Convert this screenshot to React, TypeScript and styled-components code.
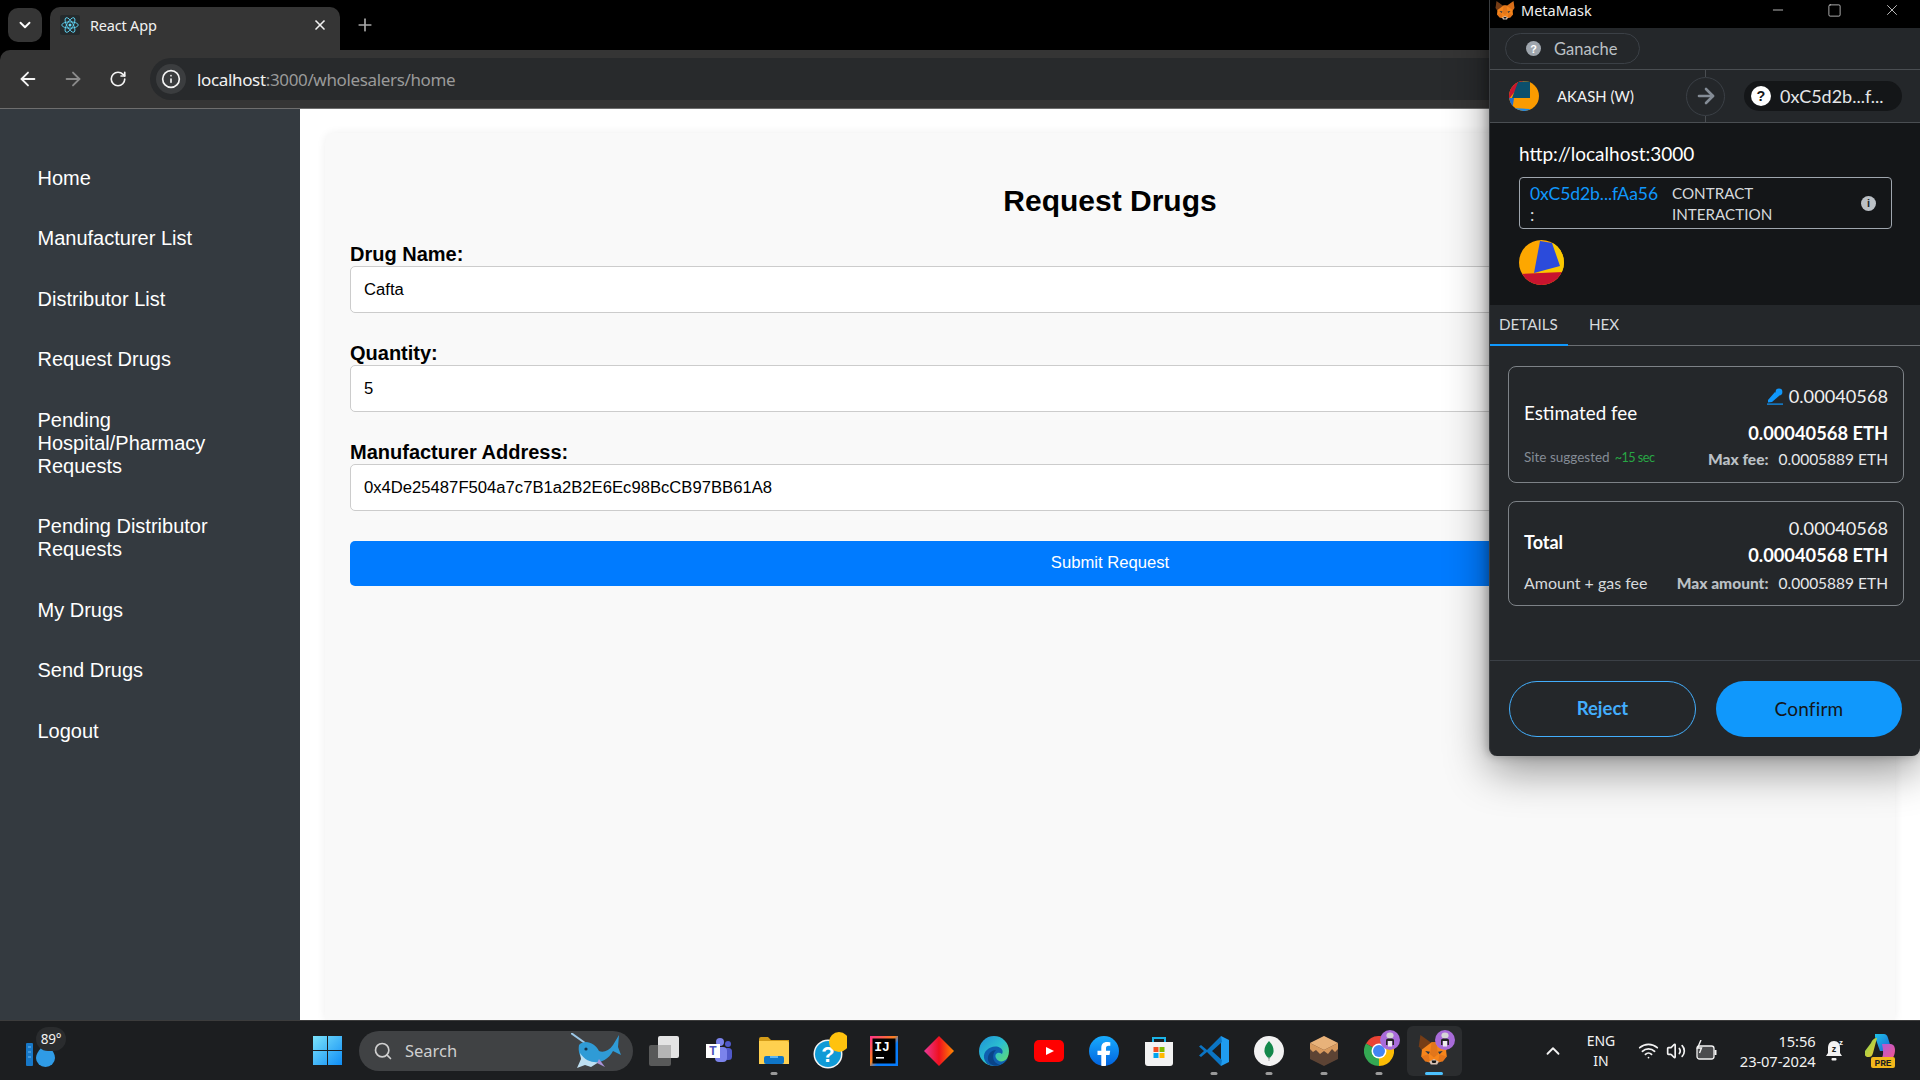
import React from "react";
import styled, { createGlobalStyle } from "styled-components";
import { ArrowLeft, ArrowRight, RotateCw, Info, ChevronDown, ChevronUp, X, Plus, Minus, Square, Search as SearchIcon, Wifi, Volume2, ArrowRight as MmArrow } from "lucide-react";

const GlobalStyle = createGlobalStyle`
  html, body { margin: 0; padding: 0; background: #000; }
  * { box-sizing: border-box; }
`;

const UI = `"Noto Sans", "Open Sans", sans-serif`;
const WEB = `"Liberation Sans", Arial, sans-serif`;
const MM = `Lato, "Noto Sans", sans-serif`;

const Desktop = styled.div`
  position: relative; width: 1920px; height: 1080px; overflow: hidden;
  display: flex; flex-direction: column; background: #000; font-family: ${WEB};
`;

/* ---------- browser chrome ---------- */
const TabStrip = styled.div`
  height: 50px; flex: none; background: #000; display: flex; align-items: flex-start;
  padding: 8px 0 0 8px;
`;
const TabSearchBtn = styled.div`
  width: 34px; height: 34px; border-radius: 10px; background: #353535; color: #fff;
  display: flex; align-items: center; justify-content: center;
`;
const Tab = styled.div`
  width: 290px; height: 43px; margin: -1px 0 0 8px; background: #353535;
  border-radius: 10px 10px 0 0; display: flex; align-items: center; padding: 0 12px 8px 10px;
  color: #f1f1f1; font: 400 14.5px ${UI};
`;
const TabIcon = styled.div`
  width: 20px; height: 20px; background: #252a2c; border-radius: 2px; display: flex;
  align-items: center; justify-content: center;
`;
const TabTitle = styled.span`
  margin-left: 10px; flex: 1; letter-spacing: -0.2px;
`;
const NewTab = styled.div`
  margin: 7px 0 0 15px; color: #a8a8a8; display: flex;
`;
const Toolbar = styled.div`
  height: 59px; flex: none; background: #353535; border-bottom: 1px solid #6e6e6e;
  border-radius: 10px 0 0 0; display: flex; align-items: center; padding: 0 0 1px 16px;
`;
const NavBtn = styled.div<{ $dim?: boolean }>`
  width: 24px; margin-right: 21px; display: flex; justify-content: center;
  color: ${(p) => (p.$dim ? "#8a8a8a" : "#f4f4f4")};
`;
const Omnibox = styled.div`
  width: 1400px; margin-left: -1px; height: 42px; border-radius: 21px 0 0 21px; background: #282a2c;
  display: flex; align-items: center; padding: 1px 0 0 6px; font: 400 17px ${UI};
`;
const SiteInfo = styled.div`
  width: 30px; height: 30px; margin-top: -1px; border-radius: 50%; background: #3b3d3f; color: #f4f4f4;
  display: flex; align-items: center; justify-content: center;
`;
const UrlHost = styled.span`
  margin-left: 11px; color: #f2f2f2; letter-spacing: -0.35px;
`;
const UrlPath = styled.span`
  color: #9a9a9a; letter-spacing: -0.35px;
`;

/* ---------- page ---------- */
const Page = styled.div`
  flex: 1; min-height: 0; display: flex; background: #fff;
`;
const Sidebar = styled.nav`
  width: 300px; flex: none; background: #343a40; padding: 57.5px 0 0 37.5px;
  display: flex; flex-direction: column; gap: 37.55px; color: #fff; font-size: 20px; line-height: 23px;
`;
const NavLink = styled.div`
  width: 210px;
`;
const Main = styled.main`
  flex: 1; min-width: 0; padding: 24px 25px 0;
`;
const Card = styled.section`
  height: 100%; background: #f9f9f9; border-radius: 10px 10px 0 0; padding: 49px 25px 0;
  box-shadow: 0 0 10px rgba(0, 0, 0, 0.07);
`;
const Title = styled.h2`
  margin: 0 0 24px; text-align: center; font-size: 30px; line-height: 37px; font-weight: 700; color: #000;
`;
const Field = styled.div`
  margin-bottom: 29px;
`;
const Label = styled.label`
  display: block; font-size: 20px; line-height: 23px; font-weight: 700; color: #000;
`;
const TextInput = styled.div`
  height: 47px; background: #fff; border: 1px solid #ccc; border-radius: 5px; padding: 0 13px;
  display: flex; align-items: center; font-size: 16.65px; color: #000;
`;
const Submit = styled.div`
  height: 45px; margin-top: 30px; padding-bottom: 2px; background: #007bff; color: #fff; border-radius: 5px;
  display: flex; align-items: center; justify-content: center; font-size: 16.65px;
`;

/* ---------- metamask window ---------- */
const Popup = styled.aside`
  position: absolute; top: 0; right: 0; width: 431px; height: 756px; background: #24272a;
  border-radius: 0 0 8px 8px; box-shadow: 0 14px 44px rgba(0, 0, 0, 0.42), -2px 0 10px rgba(0,0,0,.25);
  border-left: 1px solid #3a3d40; display: flex; flex-direction: column; font-family: ${MM}; color: #d6d9dc;
  overflow: visible;
`;
const TitleBar = styled.div`
  height: 28px; background: #000; display: flex; align-items: center; padding: 0 0 8px 5px; color: #f0f0f0;
  font: 400 14.5px ${UI};
`;
const TitleText = styled.span`
  margin-left: 6px; flex: 1;
`;
const WinBtn = styled.div`
  width: 57px; display: flex; justify-content: center; color: #e0e0e0;
`;
const NetworkRow = styled.div`
  height: 42px; border-bottom: 1px solid #4a4e52; padding: 5px 0 0 15px;
`;
const NetworkPill = styled.div`
  width: 135px; height: 31px; border: 1px solid #3b4046; border-radius: 16px; display: flex;
  align-items: center; padding-left: 20px; gap: 13px; color: #bbc0c5; font-size: 16.5px;
`;
const Qmark = styled.div<{ $size: number; $light?: boolean }>`
  width: ${(p) => p.$size}px; height: ${(p) => p.$size}px; border-radius: 50%; flex: none;
  background: ${(p) => (p.$light ? "#fff" : "#9fa6ae")}; color: ${(p) => (p.$light ? "#141618" : "#fff")};
  display: flex; align-items: center; justify-content: center; font: 700 ${(p) => p.$size * 0.72}px ${WEB};
`;
const AccountRow = styled.div`
  position: relative; height: 53px; border-bottom: 1px solid #4a4e52; display: flex; align-items: center;
  padding-left: 19px; font-size: 14.8px; color: #f2f2f2;
`;
const AccountName = styled.span`
  margin-left: 18px; width: 129px; letter-spacing: .1px;
`;
const ArrowCircle = styled.div`
  position: relative; width: 39px; height: 39px; border-radius: 50%; border: 1px solid #3b4046; background: #24272a;
  display: flex; align-items: center; justify-content: center; color: #848c96; flex: none;
  &::before, &::after { content: ""; position: absolute; left: 18px; width: 1px; height: 7px; background: #4a4e52; }
  &::before { top: -8px; }
  &::after { bottom: -8px; }
`;
const ToPill = styled.div`
  width: 158px; height: 30px; margin-left: 19px; border-radius: 15px; background: #141618;
  display: flex; align-items: center; padding-left: 7px; gap: 9px; font-size: 18px; color: #e4e6e8;
`;
const Origin = styled.div`
  height: 182px; background: #141618; padding: 19px 28px 0 29px; flex: none;
`;
const OriginUrl = styled.div`
  font-size: 19px; line-height: 24px; color: #fff;
`;
const ContractBox = styled.div`
  margin-top: 11px; height: 52px; border: 1px solid #9fa6ae; border-radius: 4px; display: flex;
  padding: 5px 10px 0; font-size: 16px; line-height: 21px;
`;
const ContractAddr = styled.div`
  width: 142px; color: #1098fc; font-size: 17.5px; letter-spacing: -.05px;
`;
const Colon = styled.div`
  color: #d6d9dc;
`;
const ContractType = styled.div`
  flex: 1; color: #d6d9dc; font-size: 15.2px;
`;
const InfoDot = styled.div`
  align-self: center; margin: -5px 5px 0 0; width: 15px; height: 15px; border-radius: 50%; background: #bbc0c5; color: #24272a;
  display: flex; align-items: center; justify-content: center; font: 700 11px ${WEB};
`;
const ContractAvatar = styled.div`
  margin-top: 11px; display: flex;
`;
const Tabs = styled.div`
  height: 41px; flex: none; border-bottom: 1px solid #6a6e72; display: flex; font-size: 15.2px;
`;
const TabItem = styled.div<{ $active?: boolean }>`
  height: 41px; display: flex; align-items: center; padding: 0 0 2px ${(p) => (p.$active ? 9 : 21)}px;
  width: 78px; color: #d6d9dc;
  border-bottom: 2px solid ${(p) => (p.$active ? "#1098fc" : "transparent")};
`;
const Details = styled.div`
  flex: 1; padding: 20px 16px 0 18px; display: flex; flex-direction: column; gap: 18px;
`;
const FeeCard = styled.div<{ $h: number; $pt: number }>`
  height: ${(p) => p.$h}px; padding: ${(p) => p.$pt}px 15px 0; border: 1px solid #7d8287; border-radius: 8px;
  font-size: 17px; line-height: 24px; color: #e6e8ea;
`;
const FeeTop = styled.div`
  display: flex; justify-content: space-between; align-items: center;
`;
const FeeLabel = styled.div<{ $bold?: boolean }>`
  font-weight: ${(p) => (p.$bold ? 700 : 400)}; color: #fff; font-size: ${(p) => (p.$bold ? 18 : 18.8)}px;
  padding-bottom: ${(p) => (p.$bold ? 0 : 3)}px;
`;
const Amounts = styled.div<{ $gap: number }>`
  display: flex; flex-direction: column; align-items: flex-end; gap: ${(p) => p.$gap}px;
`;
const Amount = styled.div`
  display: flex; align-items: center; gap: 6px; font-size: 18.2px; color: #f0f0f0;
`;
const AmountStrong = styled.div`
  font-size: 18.3px; font-weight: 700; color: #fff;
`;
const FeeBottom = styled.div<{ $mt: number }>`
  margin-top: ${(p) => p.$mt}px; display: flex; justify-content: space-between; align-items: center;
`;
const SuggestGroup = styled.span`
  margin: -2.5px 0 2.5px;
`;
const Hint = styled.span<{ $small?: boolean }>`
  color: ${(p) => (p.$small ? "#848c96" : "#d6d9dc")}; font-size: ${(p) => (p.$small ? 13.5 : 16)}px;
`;
const Soon = styled.span`
  color: #28a745; font-size: 12.6px; margin-left: 5px; letter-spacing: -.5px;
`;
const MaxRow = styled.div`
  font-size: 15.5px; color: #e6e8ea; display: flex; gap: 10px;
`;
const MaxKey = styled.b`
  color: #bbc0c5; font-weight: 900;
`;
const Footer = styled.div`
  height: 96px; flex: none; border-top: 1px solid #3b4046; padding: 20px 17px 0 19px; display: flex; gap: 20px;
`;
const Reject = styled.div`
  width: 187px; height: 56px; padding-bottom: 2px; border: 1px solid #43aefc; border-radius: 28px; color: #43aefc; font-size: 18.5px; font-weight: 700;
  display: flex; align-items: center; justify-content: center;
`;
const Confirm = styled.div`
  width: 186px; height: 56px; padding-bottom: 2px; border-radius: 28px; background: #1098fc; color: #141618; font-size: 19px; font-weight: 400; letter-spacing: .2px;
  display: flex; align-items: center; justify-content: center;
`;

/* ---------- taskbar ---------- */
const Taskbar = styled.footer`
  height: 60px; flex: none; background: #1c1e20; border-top: 1px solid #3c3c3c; display: flex; align-items: center;
  color: #f2f2f2; font-family: ${UI};
`;
const Weather = styled.div`
  position: relative; width: 313px; height: 100%; padding: 16px 0 0 26px; flex: none;
`;
const Temp = styled.span`
  position: absolute; left: 36px; top: 6px; width: 30px; height: 24px; border-radius: 12px; background: #2a2c2e;
  display: flex; align-items: center; justify-content: center; font-size: 13.5px; letter-spacing: -.3px;
`;
const SearchBox = styled.div`
  width: 274px; height: 40px; margin-left: 17px; border-radius: 20px; background: #404244; flex: none;
  display: flex; align-items: center; padding: 0 12px 0 14px; color: #cfcfcf; font-size: 16.5px;
`;
const SearchText = styled.span`
  margin-left: 12px; flex: 1;
`;
const Slots = styled.div`
  margin-left: 3.5px; display: flex; flex: none;
`;
const Slot = styled.div<{ $active?: boolean }>`
  position: relative; width: 55px; height: 50px; display: flex; align-items: center; justify-content: center;
  border-radius: 6px; background: ${(p) => (p.$active ? "#2b2d2f" : "transparent")};
`;
const RunDot = styled.span<{ $active?: boolean }>`
  position: absolute; bottom: 1px; left: 50%; transform: translateX(-50%); height: 3px; border-radius: 2px;
  width: ${(p) => (p.$active ? 18 : 7)}px; background: ${(p) => (p.$active ? "#4cc2ff" : "#9a9a9a")};
`;
const Bubble = styled.span`
  position: absolute; top: 4px; right: 7px; display: flex;
`;
const Tray = styled.div`
  margin-left: 79.5px; display: flex; align-items: center; height: 100%;
`;
const TraySlot = styled.div<{ $w: number }>`
  position: relative; width: ${(p) => p.$w}px; display: flex; align-items: center; justify-content: center; flex: none; color: #f2f2f2;
`;
const Lang = styled.div`
  text-align: center; font-size: 14px; line-height: 20px;
`;
const Clock = styled.div`
  width: 100%; text-align: right; font-size: 14.7px; line-height: 20px; letter-spacing: -.1px;
`;

/* ---------- drawings ---------- */
const ReactLogo = () => (
  <svg width="18" height="18" viewBox="-12 -12 24 24" fill="none" stroke="#61dafb" strokeWidth="1.1">
    <circle r="2" fill="#61dafb" stroke="none" />
    <ellipse rx="11" ry="4.2" />
    <ellipse rx="11" ry="4.2" transform="rotate(60)" />
    <ellipse rx="11" ry="4.2" transform="rotate(120)" />
  </svg>
);
const Fox = ({ size }: { size: number }) => (
  <svg width={size} height={size * 0.95} viewBox="0 0 40 38">
    <polygon points="3,0 17,10 6,21 1,14" fill="#763d16" />
    <polygon points="37,0 23,10 34,21 39,14" fill="#d96f1a" />
    <polygon points="5,18 17,9 23,9 35,18 36,27 27,34 13,34 4,27" fill="#f6851b" />
    <polygon points="4,27 13,24 15,34 9,33" fill="#e4761b" />
    <polygon points="36,27 27,24 25,34 31,33" fill="#e4761b" />
    <polygon points="17,9 23,9 25,24 20,28 15,24" fill="#e2761b" />
    <polygon points="9,20 15,21 13,24" fill="#233447" />
    <polygon points="31,20 25,21 27,24" fill="#233447" />
    <polygon points="14,33 20,30 26,33 24,37 16,37" fill="#d7c1b3" />
    <polygon points="17,32 23,32 22,35 18,35" fill="#161616" />
  </svg>
);
const AccountAvatar = () => (
  <svg width="30" height="30" viewBox="0 0 30 30">
    <defs><clipPath id="acc"><circle cx="15" cy="15" r="15" /></clipPath></defs>
    <g clipPath="url(#acc)">
      <rect width="30" height="30" fill="#fb9b00" />
      <polygon points="0,10 6,0 14,0 0,18" fill="#c8152f" />
      <polygon points="9,1 21,0 21,17 3,17" fill="#0b4f6c" />
      <polygon points="0,17 5,17 3,30" fill="#1f6fd0" />
      <polygon points="4,27 21,28 20,30 6,30" fill="#1e88e5" />
    </g>
  </svg>
);
const ContractBlockie = () => (
  <svg width="45" height="45" viewBox="0 0 45 45">
    <defs><clipPath id="con"><circle cx="22.5" cy="22.5" r="22.5" /></clipPath></defs>
    <g clipPath="url(#con)">
      <rect width="45" height="45" fill="#fda700" />
      <polygon points="33,3 33,0 45,0 45,32 20,33" fill="#f9c800" />
      <polygon points="21,1 33,3 41,26 15,33" fill="#2b4bdb" />
      <polygon points="0,34 45,32 45,45 0,45" fill="#c8142e" />
    </g>
  </svg>
);
const Pencil = () => (
  <svg width="16" height="17" viewBox="0 0 16 17">
    <path d="M1 12 L8 4 L12.500 7.500 L5 14 L1 14.500 Z" fill="#1098fc" />
    <circle cx="12" cy="4" r="3.400" fill="#1098fc" />
    <rect x="0" y="15.500" width="16" height="1.200" fill="#1098fc" />
  </svg>
);
const WeatherIcon = () => (
  <svg width="30" height="30" viewBox="0 0 30 30">
    <rect x="0" y="6" width="7" height="23" rx="1" fill="#1778c8" />
    <path d="M2 10h3M2 15h3M2 20h3" stroke="#6fb8ee" />
    <path d="M20 6c0 0 -10 8 -10 15a9.500 9 0 0 0 19 0c0 -7 -9 -15 -9 -15z" fill="#2f9be6" />
  </svg>
);
const StartLogo = () => (
  <svg width="29" height="29" viewBox="0 0 29 29">
    <defs>
      <linearGradient id="win" x1="0" y1="0" x2="1" y2="1"><stop offset="0" stopColor="#7be3fb" /><stop offset="1" stopColor="#0f8df5" /></linearGradient>
    </defs>
    <path d="M0 0h14v14H0zM15 0h14v14H15zM0 15h14v14H0zM15 15h14v14H15z" fill="url(#win)" />
  </svg>
);
const Whale = () => (
  <svg width="50" height="36" viewBox="0 0 50 36">
    <path d="M0 0 L14 10" stroke="#9cc7e6" strokeWidth="2" />
    <path d="M8 12 C14 6 24 10 28 18 C32 20 38 18 42 12 L48 2 L47 14 L50 22 L42 18 C38 26 30 30 22 30 C14 30 6 24 8 12Z" fill="#2f9bd6" />
    <path d="M9 20 C14 28 22 30 28 29 L20 34 L14 32 L6 35 L10 26Z" fill="#bfe0f2" />
    <path d="M28 26 L34 34 L26 30Z" fill="#a993d8" />
    <circle cx="15" cy="16" r="1.600" fill="#12324a" />
  </svg>
);
const TaskView = () => (
  <svg width="30" height="30" viewBox="0 0 30 30">
    <rect x="9" y="0" width="21" height="22" rx="2" fill="#e4e4e4" />
    <rect x="0" y="9" width="22" height="21" rx="2" fill="#5f5f5f" fillOpacity=".9" />
    <rect x="9" y="9" width="13" height="13" fill="#b5b5b5" />
  </svg>
);
const Teams = () => (
  <svg width="28" height="28" viewBox="0 0 28 28">
    <circle cx="15" cy="5" r="4" fill="#7b83eb" />
    <circle cx="23" cy="7" r="3" fill="#5059c9" />
    <rect x="19" y="11" width="8" height="12" rx="3.500" fill="#5059c9" />
    <rect x="10" y="10" width="12" height="15" rx="4" fill="#7b83eb" />
    <rect x="1" y="7" width="14" height="14" fill="#fff" />
    <text x="8" y="18" textAnchor="middle" fontSize="12" fontWeight="700" fontFamily="Liberation Sans" fill="#4b53bc">T</text>
  </svg>
);
const Folder = () => (
  <svg width="30" height="27" viewBox="0 0 30 27">
    <path d="M0 2a2 2 0 0 1 2-2h7l3 3h18v5H0z" fill="#d49c19" />
    <path d="M0 4h28a2 2 0 0 1 2 2v21H0z" fill="#ffd04f" />
    <rect x="5" y="19" width="20" height="8" rx="2" fill="#0f76c8" />
    <rect x="11" y="19" width="8" height="2" fill="#5fb6f0" />
  </svg>
);
const HelpIcon = () => (
  <svg width="36" height="38" viewBox="0 0 36 38">
    <circle cx="17" cy="22" r="14.500" fill="#f4f4f4" />
    <circle cx="17" cy="22" r="13" fill="#0f9ad6" />
    <text x="17" y="30" textAnchor="middle" fontSize="22" fontWeight="700" fontFamily="Liberation Sans" fill="#fff">?</text>
    <circle cx="28" cy="10" r="10" fill="#ffc20e" />
  </svg>
);
const Intellij = () => (
  <svg width="28" height="30" viewBox="0 0 28 30" preserveAspectRatio="none">
    <defs><linearGradient id="ij" x1="0" y1="0" x2="1" y2="1"><stop offset="0" stopColor="#ff318c" /><stop offset=".45" stopColor="#fc801d" /><stop offset=".6" stopColor="#087cfa" /><stop offset="1" stopColor="#087cfa" /></linearGradient></defs>
    <rect width="28" height="30" fill="url(#ij)" />
    <rect x="2.500" y="2.500" width="23" height="25" fill="#000" />
    <text x="12" y="15" textAnchor="middle" fontSize="13" fontWeight="700" fontFamily="Liberation Mono" fill="#fff">IJ</text>
    <rect x="6" y="21" width="8" height="1.600" fill="#fff" />
  </svg>
);
const Diamond = () => (
  <svg width="30" height="30" viewBox="0 0 30 30">
    <defs><linearGradient id="dia" x1="0" y1="0" x2="1" y2="0"><stop offset="0" stopColor="#e9399a" /><stop offset=".5" stopColor="#f0101f" /><stop offset="1" stopColor="#ff8a00" /></linearGradient></defs>
    <polygon points="15,0 30,15 15,30 0,15" fill="url(#dia)" />
  </svg>
);
const Edge = () => (
  <svg width="30" height="30" viewBox="0 0 30 30">
    <defs>
      <linearGradient id="ed" x1="0" y1="0" x2="1" y2="1"><stop offset="0" stopColor="#1f8fd8" /><stop offset=".5" stopColor="#2bc0d0" /><stop offset="1" stopColor="#6fe05c" /></linearGradient>
    </defs>
    <circle cx="15" cy="15" r="15" fill="url(#ed)" />
    <path d="M5 22 C4 15 11 9.500 18 10.500 C22.500 11.500 25 15 23 18 C19 15 15 18 17 22 C19 26 24 27 29 22 C26 27.500 21 30 15 30 C10 30 6 27 5 22Z" fill="#0f5fb0" />
    <path d="M9 24 C8 18 13 14 17 14 C14 17 13 22 16 26 C18 28 21 29 21 29 C15 31 10 28 9 24Z" fill="#0a4488" />
  </svg>
);
const YouTube = () => (
  <svg width="30" height="22" viewBox="0 0 30 22">
    <rect width="30" height="22" rx="5" fill="#f00" />
    <polygon points="12,7 20,11 12,15" fill="#fff" />
  </svg>
);
const Facebook = () => (
  <svg width="30" height="30" viewBox="0 0 30 30">
    <defs><linearGradient id="fb" x1="0" y1="0" x2="0" y2="1"><stop offset="0" stopColor="#18acfe" /><stop offset="1" stopColor="#0163e0" /></linearGradient></defs>
    <circle cx="15" cy="15" r="15" fill="url(#fb)" />
    <path d="M20.500 19l.7-4.300h-4.200v-2.700c0-1.200.6-2.300 2.400-2.300h1.900V6.200s-1.700-.3-3.400-.3c-3.400 0-5.600 2.100-5.600 5.800v3h-3.800V19h3.800v10.800a15 15 0 0 0 4.700 0V19z" fill="#fff" />
  </svg>
);
const Store = () => (
  <svg width="28" height="30" viewBox="0 0 28 30">
    <path d="M8 6V2h12v4" fill="none" stroke="#1bb4e8" strokeWidth="2" />
    <path d="M0 6h28v21a3 3 0 0 1 -3 3H3a3 3 0 0 1 -3 -3z" fill="#f2f2f2" />
    <rect x="8.500" y="11" width="5" height="5" fill="#f25022" />
    <rect x="14.500" y="11" width="5" height="5" fill="#7fba00" />
    <rect x="8.500" y="17" width="5" height="5" fill="#00a4ef" />
    <rect x="14.500" y="17" width="5" height="5" fill="#ffb900" />
  </svg>
);
const VSCode = () => (
  <svg width="30" height="30" viewBox="0 0 30 30">
    <path d="M22 0 L30 4 V26 L22 30 Z" fill="#1f9cf0" />
    <path d="M22 0 L8 14 L2 9 L0 10.500 L5 15 L0 19.500 L2 21 L8 16 L22 30 L23 24 L13 15 L23 6 Z" fill="#0b75c4" />
  </svg>
);
const Mongo = () => (
  <svg width="30" height="30" viewBox="0 0 30 30">
    <circle cx="15" cy="15" r="15" fill="#f2f2f2" />
    <path d="M15 5c3 3 5 7 4.500 11c-.5 3 -3 5 -4.500 7c-1.500 -2 -4 -4 -4.500 -7C10 12 12 8 15 5z" fill="#13874b" />
    <rect x="14.500" y="21" width="1" height="4" fill="#a8a8a8" />
  </svg>
);
const Crate = () => (
  <svg width="28" height="30" viewBox="0 0 28 30">
    <polygon points="14,0 28,7 28,23 14,30 0,23 0,7" fill="#5c4334" />
    <polygon points="14,0 28,7 14,14 0,7" fill="#e8b27a" />
    <path d="M0 7 L14 14 L28 7 V13 L25 16 L22 13 L18 18 L14 15 L10 18 L6 14 L3 16 L0 13Z" fill="#d89a5e" />
  </svg>
);
const Chrome = () => (
  <svg width="30" height="30" viewBox="0 0 30 30">
    <path d="M15 15 L2 7.500 A15 15 0 0 1 28 7.500Z" fill="#ea4335" />
    <path d="M15 15 L28 7.500 A15 15 0 0 1 15 30Z" fill="#fbbc05" />
    <path d="M15 15 L15 30 A15 15 0 0 1 2 7.500Z" fill="#34a853" />
    <circle cx="15" cy="15" r="7.500" fill="#fff" />
    <circle cx="15" cy="15" r="6" fill="#4285f4" />
  </svg>
);
const Badge = () => (
  <svg width="20" height="20" viewBox="0 0 20 20">
    <circle cx="10" cy="10" r="10" fill="#a86bd9" />
    <ellipse cx="10" cy="5.500" rx="3.600" ry="3" fill="#d5d5d5" />
    <path d="M6 15V10.500C6 9 7 8.500 10 8.500C13 8.500 14 9 14 10.500V15h-1.500V11h-5v4z" fill="#222" />
    <rect x="8" y="11" width="4" height="5.500" fill="#eee" />
  </svg>
);
const Battery = () => (
  <svg width="24" height="22" viewBox="0 0 24 22" fill="none" stroke="#f2f2f2" strokeWidth="1.300">
    <rect x="2" y="6" width="17" height="13" rx="2.500" fill="#d8d8d8" fillOpacity=".25" />
    <path d="M20.500 10v5" strokeWidth="2" />
    <path d="M6 0 L2.500 8 H6.500 L4.500 13" strokeWidth="1.400" />
  </svg>
);
const SnoozeBell = () => (
  <svg width="20" height="26" viewBox="0 0 20 26">
    <path d="M9 3c-4 0 -6 3 -6 7v5l-2 3h16l-2 -3v-5c0 -4 -2 -7 -6 -7z" fill="#f2f2f2" />
    <rect x="6.500" y="20" width="5" height="2.500" rx="1" fill="#f2f2f2" />
    <text x="9" y="14" textAnchor="middle" fontSize="9" fontWeight="700" fontFamily="Liberation Sans" fill="#1c1e20">z</text>
    <text x="16" y="7" textAnchor="middle" fontSize="8" fontWeight="700" fontFamily="Liberation Sans" fill="#f2f2f2">z</text>
  </svg>
);
const Copilot = () => (
  <svg width="30" height="34" viewBox="0 0 30 34">
    <defs>
      <linearGradient id="cp1" x1="0" y1="0" x2="1" y2="1"><stop offset="0" stopColor="#1dc3e8" /><stop offset="1" stopColor="#1b5fd6" /></linearGradient>
      <linearGradient id="cp2" x1="0" y1="0" x2="1" y2="1"><stop offset="0" stopColor="#7ed957" /><stop offset="1" stopColor="#f5c52b" /></linearGradient>
      <linearGradient id="cp3" x1="0" y1="0" x2="1" y2="1"><stop offset="0" stopColor="#b05ad8" /><stop offset="1" stopColor="#f2558e" /></linearGradient>
    </defs>
    <path d="M10 0h9c2 0 3 1 4 4l4 13H15L10 3z" fill="url(#cp1)" />
    <path d="M6 9c1 -3 3 -5 6 -5l-4 15c-1 3 -2 4 -4 4H3C0 23 -1 20 0 17z" fill="url(#cp2)" />
    <path d="M17 10h8c3 0 5 2 5 6c0 5 -2 9 -5 9h-9c2 -2 3 -6 1 -15z" fill="url(#cp3)" />
    <rect x="6" y="23" width="24" height="11" rx="2" fill="#f2b71b" />
    <text x="18" y="32" textAnchor="middle" fontSize="9.500" fontWeight="700" fontFamily="Liberation Mono" fill="#1c1e20">PRE</text>
  </svg>
);

const navItems = [
  "Home", "Manufacturer List", "Distributor List", "Request Drugs", "Pending Hospital/Pharmacy Requests",
  "Pending Distributor Requests", "My Drugs", "Send Drugs", "Logout",
];
const fields = [
  ["Drug Name:", "Cafta"],
  ["Quantity:", "5"],
  ["Manufacturer Address:", "0x4De25487F504a7c7B1a2B2E6Ec98BcCB97BB61A8"],
];
const apps: { key: string; icon: React.ReactNode; run?: boolean; badge?: boolean; active?: boolean }[] = [
  { key: "view", icon: <TaskView /> },
  { key: "teams", icon: <Teams /> },
  { key: "files", icon: <Folder />, run: true },
  { key: "help", icon: <HelpIcon /> },
  { key: "ij", icon: <Intellij /> },
  { key: "dia", icon: <Diamond /> },
  { key: "edge", icon: <Edge /> },
  { key: "yt", icon: <YouTube /> },
  { key: "fb", icon: <Facebook /> },
  { key: "store", icon: <Store /> },
  { key: "vs", icon: <VSCode />, run: true },
  { key: "mongo", icon: <Mongo />, run: true },
  { key: "crate", icon: <Crate />, run: true },
  { key: "chrome", icon: <Chrome />, run: true, badge: true },
  { key: "fox", icon: <Fox size={32} />, run: true, badge: true, active: true },
];

export default function App() {
  return (
    <Desktop>
      <GlobalStyle />
      <TabStrip>
        <TabSearchBtn><ChevronDown size={18} strokeWidth={2.5} /></TabSearchBtn>
        <Tab>
          <TabIcon><ReactLogo /></TabIcon>
          <TabTitle>React App</TabTitle>
          <X size={16} strokeWidth={2.5} />
        </Tab>
        <NewTab><Plus size={20} /></NewTab>
      </TabStrip>
      <Toolbar>
        <NavBtn><ArrowLeft size={22} /></NavBtn>
        <NavBtn $dim><ArrowRight size={22} /></NavBtn>
        <NavBtn><RotateCw size={18} strokeWidth={2.2} /></NavBtn>
        <Omnibox>
          <SiteInfo><Info size={20} /></SiteInfo>
          <UrlHost>localhost</UrlHost><UrlPath>:3000/wholesalers/home</UrlPath>
        </Omnibox>
      </Toolbar>
      <Page>
        <Sidebar>
          {navItems.map((n) => <NavLink key={n}>{n}</NavLink>)}
        </Sidebar>
        <Main>
          <Card>
            <Title>Request Drugs</Title>
            {fields.map(([l, v]) => (
              <Field key={l}>
                <Label>{l}</Label>
                <TextInput>{v}</TextInput>
              </Field>
            ))}
            <Submit>Submit Request</Submit>
          </Card>
        </Main>
      </Page>
      <Taskbar>
        <Weather><WeatherIcon /><Temp>89°</Temp></Weather>
        <StartLogo />
        <SearchBox>
          <SearchIcon size={20} />
          <SearchText>Search</SearchText>
          <Whale />
        </SearchBox>
        <Slots>
          {apps.map((a) => (
            <Slot key={a.key} $active={a.active}>
              {a.icon}
              {a.badge && <Bubble><Badge /></Bubble>}
              {a.run && <RunDot $active={a.active} />}
            </Slot>
          ))}
        </Slots>
        <Tray>
          <TraySlot $w={24}><ChevronUp size={22} /></TraySlot>
          <TraySlot $w={72}><Lang>ENG<br />IN</Lang></TraySlot>
          <TraySlot $w={22}><Wifi size={21} /></TraySlot>
          <TraySlot $w={34}><Volume2 size={20} /></TraySlot>
          <TraySlot $w={28}><Battery /></TraySlot>
          <TraySlot $w={94.5}><Clock>15:56<br />23-07-2024</Clock></TraySlot>
          <TraySlot $w={39}><SnoozeBell /></TraySlot>
          <TraySlot $w={51}><Copilot /></TraySlot>
        </Tray>
      </Taskbar>
      <Popup>
        <TitleBar>
          <Fox size={20} />
          <TitleText>MetaMask</TitleText>
          <WinBtn><Minus size={16} strokeWidth={1.2} /></WinBtn>
          <WinBtn><Square size={15} strokeWidth={1.2} /></WinBtn>
          <WinBtn><X size={18} strokeWidth={1.1} /></WinBtn>
        </TitleBar>
        <NetworkRow>
          <NetworkPill><Qmark $size={15}>?</Qmark>Ganache</NetworkPill>
        </NetworkRow>
        <AccountRow>
          <AccountAvatar />
          <AccountName>AKASH (W)</AccountName>
          <ArrowCircle><MmArrow size={24} strokeWidth={2.6} /></ArrowCircle>
          <ToPill><Qmark $size={20} $light>?</Qmark>0xC5d2b...f...</ToPill>
        </AccountRow>
        <Origin>
          <OriginUrl>http://localhost:3000</OriginUrl>
          <ContractBox>
            <ContractAddr>0xC5d2b...fAa56<Colon>:</Colon></ContractAddr>
            <ContractType>CONTRACT<br />INTERACTION</ContractType>
            <InfoDot>i</InfoDot>
          </ContractBox>
          <ContractAvatar><ContractBlockie /></ContractAvatar>
        </Origin>
        <Tabs>
          <TabItem $active>DETAILS</TabItem>
          <TabItem>HEX</TabItem>
        </Tabs>
        <Details>
          <FeeCard $h={117} $pt={17}>
            <FeeTop>
              <FeeLabel>Estimated fee</FeeLabel>
              <Amounts $gap={13}>
                <Amount><Pencil />0.00040568</Amount>
                <AmountStrong>0.00040568 ETH</AmountStrong>
              </Amounts>
            </FeeTop>
            <FeeBottom $mt={1}>
              <SuggestGroup><Hint $small>Site suggested</Hint><Soon>~15 sec</Soon></SuggestGroup>
              <MaxRow><MaxKey>Max fee:</MaxKey>0.0005889 ETH</MaxRow>
            </FeeBottom>
          </FeeCard>
          <FeeCard $h={105} $pt={14}>
            <FeeTop>
              <FeeLabel $bold>Total</FeeLabel>
              <Amounts $gap={3}>
                <Amount>0.00040568</Amount>
                <AmountStrong>0.00040568 ETH</AmountStrong>
              </Amounts>
            </FeeTop>
            <FeeBottom $mt={4}>
              <Hint>Amount + gas fee</Hint>
              <MaxRow><MaxKey>Max amount:</MaxKey>0.0005889 ETH</MaxRow>
            </FeeBottom>
          </FeeCard>
        </Details>
        <Footer>
          <Reject>Reject</Reject>
          <Confirm>Confirm</Confirm>
        </Footer>
      </Popup>
    </Desktop>
  );
}
